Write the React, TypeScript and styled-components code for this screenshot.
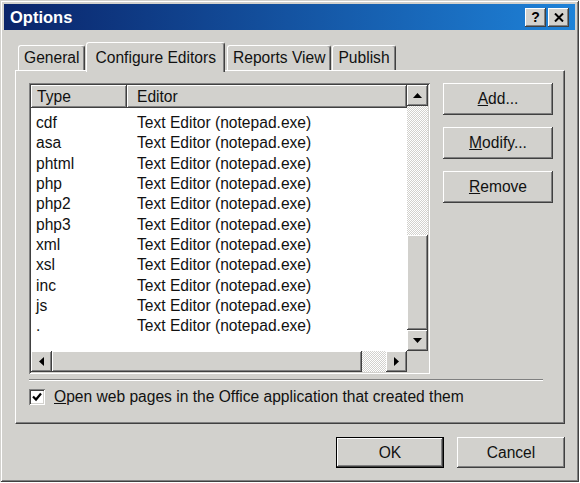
import styled, { createGlobalStyle, css } from "styled-components";

const FACE = "#d2d1cd";

const GlobalStyle = createGlobalStyle`
  html, body {
    margin: 0;
    padding: 0;
    background: #ffffff;
  }
  body {
    font-family: "Liberation Sans", Arial, sans-serif;
    font-size: 15.6px;
    color: #111111;
  }
`;

const raised = css`
  box-shadow: inset -1px -1px #404040, inset 1px 1px #ffffff,
    inset -2px -2px #808080, inset 2px 2px ${FACE};
`;

const sunken = css`
  box-shadow: inset 1px 1px #808080, inset -1px -1px #ffffff,
    inset 2px 2px #404040, inset -2px -2px ${FACE};
`;

const dither = css`
  background: repeating-conic-gradient(#ffffff 0 25%, ${FACE} 0 50%) 0 0 / 2px 2px;
`;

const Window = styled.div`
  box-sizing: border-box;
  width: 579px;
  height: 482px;
  padding: 4px;
  background: ${FACE};
  box-shadow: inset 1px 1px ${FACE}, inset -1px -1px #404040,
    inset 2px 2px #ffffff, inset -2px -2px #808080;
  display: flex;
  flex-direction: column;
`;

const TitleBar = styled.div`
  height: 26px;
  flex-shrink: 0;
  background: linear-gradient(to right, #0a246a, #1e82d8);
  display: flex;
  align-items: center;
  justify-content: space-between;
  padding: 0 6px;
`;

const Title = styled.span`
  color: #ffffff;
  font-weight: bold;
  font-size: 16.5px;
`;

const TitleButtons = styled.div`
  display: flex;
  gap: 2px;
`;

const TitleButton = styled.div`
  width: 21px;
  height: 19px;
  background: ${FACE};
  ${raised};
  display: flex;
  align-items: center;
  justify-content: center;
  font-weight: bold;
  font-size: 14px;
  line-height: 1;
  color: #000000;
`;

const Body = styled.div`
  flex: 1;
  display: flex;
  flex-direction: column;
  padding: 12px 10px 0 11px;
`;

const TabRow = styled.div`
  display: flex;
  align-items: flex-end;
  padding-left: 3px;
`;

const Tab = styled.div<{ $active?: boolean }>`
  position: relative;
  z-index: ${(p) => (p.$active ? 1 : 0)};
  box-sizing: border-box;
  height: ${(p) => (p.$active ? 30 : 25)}px;
  margin-bottom: ${(p) => (p.$active ? -2 : 0)}px;
  margin-right: ${(p) => (p.$active ? 2 : 1)}px;
  padding: 0 ${(p) => (p.$active ? 8 : 5)}px;
  background: ${FACE};
  border-top: 1px solid #ffffff;
  border-left: 1px solid #ffffff;
  border-right: 1px solid #404040;
  border-radius: 3px 3px 0 0;
  box-shadow: inset -1px 0 #808080;
  display: flex;
  align-items: center;
`;

const Panel = styled.div`
  box-sizing: border-box;
  height: 354px;
  border-top: 1px solid #ffffff;
  border-left: 1px solid #ffffff;
  border-right: 1px solid #404040;
  border-bottom: 1px solid #404040;
  box-shadow: inset -1px -1px #808080;
  padding: 12px 11px 0 13px;
  display: flex;
  flex-direction: column;
`;

const TopRow = styled.div`
  display: flex;
  gap: 13px;
`;

const ListView = styled.div`
  box-sizing: border-box;
  width: 401px;
  height: 291px;
  padding: 2px;
  background: ${FACE};
  ${sunken};
  display: grid;
  grid-template-columns: 1fr 21px;
  grid-template-rows: 1fr 21px;
`;

const ListContent = styled.div`
  background: #ffffff;
  overflow: hidden;
`;

const Columns = styled.div`
  display: grid;
  grid-template-columns: 96px 1fr;
`;

const HeaderCell = styled.div<{ $pad: number }>`
  height: 23px;
  background: ${FACE};
  ${raised};
  display: flex;
  align-items: center;
  padding-left: ${(p) => p.$pad}px;
`;

const Rows = styled.div`
  padding-top: 5px;
`;

const Cell = styled.div<{ $pad: number }>`
  height: 20.3px;
  display: flex;
  align-items: center;
  padding-left: ${(p) => p.$pad}px;
  white-space: nowrap;
`;

const VScroll = styled.div`
  display: flex;
  flex-direction: column;
`;

const HScroll = styled.div`
  display: flex;
`;

const ScrollButton = styled.div`
  width: 21px;
  height: 21px;
  flex-shrink: 0;
  background: ${FACE};
  ${raised};
  display: flex;
  align-items: center;
  justify-content: center;
`;

const Track = styled.div`
  flex: 1;
  ${dither};
`;

const Thumb = styled.div<{ $vertical?: boolean }>`
  flex-shrink: 0;
  ${(p) => (p.$vertical ? "height: 95px;" : "width: 310px;")}
  background: ${FACE};
  ${raised};
`;

const Corner = styled.div`
  background: ${FACE};
`;

const ButtonColumn = styled.div`
  display: flex;
  flex-direction: column;
  gap: 12px;
`;

const Button = styled.div<{ $default?: boolean; $w: number; $h: number }>`
  box-sizing: border-box;
  width: ${(p) => p.$w}px;
  height: ${(p) => p.$h}px;
  background: ${FACE};
  display: flex;
  align-items: center;
  justify-content: center;
  ${(p) =>
    p.$default
      ? css`
          box-shadow: inset 0 0 0 1px #000000, inset -2px -2px #404040,
            inset 2px 2px #ffffff, inset -3px -3px #808080;
        `
      : raised};
`;

const Separator = styled.div`
  margin-top: 5px;
  margin-right: 10px;
  border-top: 1px solid #808080;
  border-bottom: 1px solid #ffffff;
`;

const CheckRow = styled.div`
  margin-top: 7px;
  display: flex;
  align-items: center;
  gap: 9px;
`;

const CheckBox = styled.div`
  box-sizing: border-box;
  width: 16px;
  height: 16px;
  background: #ffffff;
  ${sunken};
  display: flex;
  align-items: center;
  justify-content: center;
`;

const Footer = styled.div`
  margin-top: 13px;
  display: flex;
  justify-content: flex-end;
  gap: 13px;
`;

type Dir = "up" | "down" | "left" | "right";

const arrowPoints: Record<Dir, string> = {
  up: "0,5 4.5,0 9,5",
  down: "0,0 4.5,5 9,0",
  left: "5,0 0,4.5 5,9",
  right: "0,0 5,4.5 0,9",
};

const Arrow = ({ dir }: { dir: Dir }) => {
  const flat = dir === "up" || dir === "down";
  return (
    <svg width={flat ? 9 : 5} height={flat ? 5 : 9}>
      <polygon points={arrowPoints[dir]} fill="#000" />
    </svg>
  );
};

const rows = [
  "cdf",
  "asa",
  "phtml",
  "php",
  "php2",
  "php3",
  "xml",
  "xsl",
  "inc",
  "js",
  ".",
];

export default function App() {
  return (
    <>
      <GlobalStyle />
      <Window>
        <TitleBar>
          <Title>Options</Title>
          <TitleButtons>
            <TitleButton>?</TitleButton>
            <TitleButton>
              <svg width="10" height="9">
                <path d="M1 0.5 L9 8.5 M9 0.5 L1 8.5" stroke="#000" strokeWidth="2" />
              </svg>
            </TitleButton>
          </TitleButtons>
        </TitleBar>
        <Body>
          <TabRow>
            <Tab>General</Tab>
            <Tab $active>Configure Editors</Tab>
            <Tab>Reports View</Tab>
            <Tab>Publish</Tab>
          </TabRow>
          <Panel>
            <TopRow>
              <ListView>
                <ListContent>
                  <Columns>
                    <HeaderCell $pad={6}>Type</HeaderCell>
                    <HeaderCell $pad={10}>Editor</HeaderCell>
                  </Columns>
                  <Rows>
                    {rows.map((t) => (
                      <Columns key={t}>
                        <Cell $pad={5}>{t}</Cell>
                        <Cell $pad={10}>Text Editor (notepad.exe)</Cell>
                      </Columns>
                    ))}
                  </Rows>
                </ListContent>
                <VScroll>
                  <ScrollButton>
                    <Arrow dir="up" />
                  </ScrollButton>
                  <Track />
                  <Thumb $vertical />
                  <ScrollButton>
                    <Arrow dir="down" />
                  </ScrollButton>
                </VScroll>
                <HScroll>
                  <ScrollButton>
                    <Arrow dir="left" />
                  </ScrollButton>
                  <Thumb />
                  <Track />
                  <ScrollButton>
                    <Arrow dir="right" />
                  </ScrollButton>
                </HScroll>
                <Corner />
              </ListView>
              <ButtonColumn>
                <Button $w={110} $h={32}>
                  <span>
                    <u>A</u>dd...
                  </span>
                </Button>
                <Button $w={110} $h={32}>
                  <span>
                    <u>M</u>odify...
                  </span>
                </Button>
                <Button $w={110} $h={32}>
                  <span>
                    <u>R</u>emove
                  </span>
                </Button>
              </ButtonColumn>
            </TopRow>
            <Separator />
            <CheckRow>
              <CheckBox>
                <svg width="10" height="10">
                  <path d="M1 4.5 L4 7.5 L9 1.5" stroke="#000" strokeWidth="2.2" fill="none" />
                </svg>
              </CheckBox>
              <span>
                <u>O</u>pen web pages in the Office application that created them
              </span>
            </CheckRow>
          </Panel>
          <Footer>
            <Button $default $w={108} $h={31}>
              OK
            </Button>
            <Button $w={108} $h={31}>
              Cancel
            </Button>
          </Footer>
        </Body>
      </Window>
    </>
  );
}
